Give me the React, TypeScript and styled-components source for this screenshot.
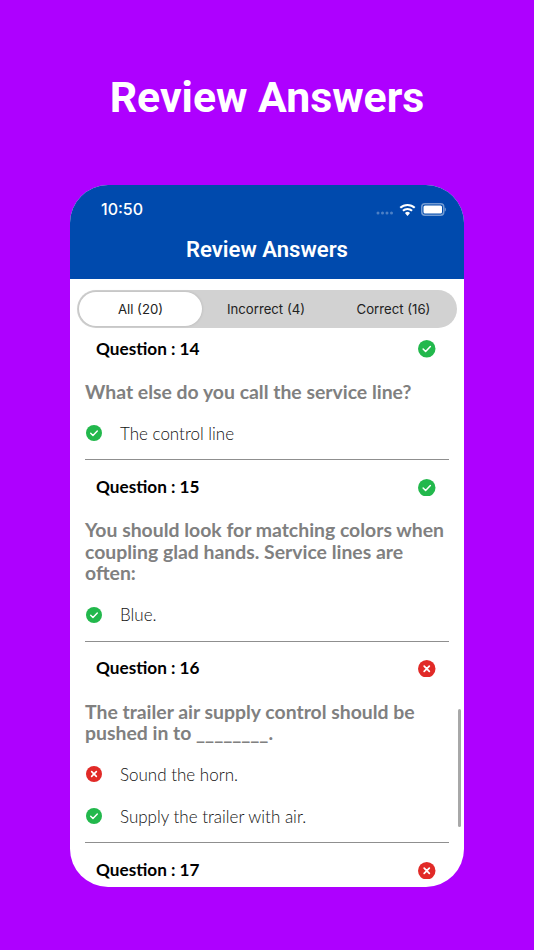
import styled, { createGlobalStyle } from 'styled-components'

const GlobalStyle = createGlobalStyle`
  html, body {
    margin: 0;
    padding: 0;
    background: #ae00ff;
  }
`

const Page = styled.div`
  width: 534px;
  height: 950px;
  overflow: hidden;
  display: flex;
  flex-direction: column;
  align-items: center;
  background: #ae00ff;
`

const Headline = styled.h1`
  margin: 71px 0 0;
  height: 114px;
  font-family: Roboto, sans-serif;
  font-size: 42.8px;
  line-height: 52px;
  font-weight: 700;
  color: #fff;
`

const Phone = styled.div`
  position: relative;
  width: 394px;
  height: 702px;
  border-radius: 38px;
  overflow: hidden;
  background: #fff;
  display: flex;
  flex-direction: column;
`

const Header = styled.header`
  height: 94px;
  flex: none;
  background: #004aad;
  color: #fff;
`

const StatusBar = styled.div`
  height: 48px;
  padding: 0 18px 0 31px;
  display: flex;
  align-items: center;
  justify-content: space-between;
`

const Time = styled.span`
  font-family: Inter, sans-serif;
  font-size: 16px;
  font-weight: 500;
`

const StatusIcons = styled.div`
  display: flex;
  align-items: center;
  gap: 5px;
`

const NavTitle = styled.div`
  margin-top: 2px;
  text-align: center;
  font-family: Roboto, sans-serif;
  font-size: 22.1px;
  line-height: 28px;
  font-weight: 600;
`

const Tabs = styled.div`
  flex: none;
  margin: 11px 7px 0;
  height: 38px;
  border-radius: 19px;
  background: #d2d2d2;
  display: grid;
  grid-template-columns: 125px 1fr 127px;
  align-items: stretch;
`

const Tab = styled.div<{ $active?: boolean }>`
  display: flex;
  align-items: center;
  justify-content: center;
  margin: ${({ $active }) => ($active ? '2px 0 2px 2px' : '0')};
  border-radius: 17px;
  background: ${({ $active }) => ($active ? '#fff' : 'transparent')};
  box-shadow: ${({ $active }) => ($active ? '0 0 3px rgba(0, 0, 0, 0.15)' : 'none')};
  font-family: Inter, sans-serif;
  font-size: 13.2px;
  color: #222;
`

const List = styled.div`
  flex: 1;
  min-height: 0;
  overflow: hidden;
  padding: 0 15px;
`

const Card = styled.section<{ $first?: boolean }>`
  margin-top: ${({ $first }) => ($first ? '-6px' : '0')};
  border-bottom: 1px solid #8f8f8f;
  padding-bottom: 5px;

  &:last-child {
    border-bottom: none;
  }
`

const CardHead = styled.div`
  height: 52px;
  padding: 0 13.5px 0 11px;
  display: flex;
  align-items: center;
  justify-content: space-between;
`

const HeadMark = styled.span`
  display: flex;
  margin-top: 2px;
`

const QuestionNo = styled.span`
  font-family: Lato, sans-serif;
  font-size: 17.2px;
  font-weight: 700;
  color: #000;
`

const QuestionText = styled.p`
  margin: 7px 0 10.2px;
  font-family: Lato, sans-serif;
  font-size: 19.4px;
  line-height: 21.3px;
  font-weight: 700;
  color: #808080;
`

const Answer = styled.div`
  height: 42px;
  padding-left: 1px;
  display: flex;
  align-items: center;
  gap: 18px;
  font-family: Lato, sans-serif;
  font-size: 17px;
  font-weight: 300;
  color: #111;
`

const Scrollbar = styled.div`
  position: absolute;
  right: 3px;
  top: 524px;
  width: 3px;
  height: 118px;
  border-radius: 2px;
  background: #a8a8a8;
`

const StatusMark = ({ ok, size }: { ok: boolean; size: number }) => (
  <svg width={size} height={size} viewBox="0 0 17 17" style={{ flex: 'none' }}>
    <circle cx="8.5" cy="8.5" r="8.5" fill={ok ? '#22b84c' : '#e12a27'} />
    {ok ? (
      <path d="M5 8.8l2.4 2.4L12 6.4" fill="none" stroke="#fff" strokeWidth="1.5" strokeLinecap="round" strokeLinejoin="round" />
    ) : (
      <path d="M6 6l5 5M11 6l-5 5" fill="none" stroke="#fff" strokeWidth="1.7" strokeLinecap="round" />
    )}
  </svg>
)

const SignalDots = () => (
  <svg width="18" height="4" viewBox="0 0 18 4" style={{ marginTop: 8 }}>
    {[2, 6.5, 11, 15.5].map((cx) => (
      <circle key={cx} cx={cx} cy="2" r="1.5" fill="#fff" opacity="0.3" />
    ))}
  </svg>
)

const Wifi = () => (
  <svg width="17" height="13" viewBox="0 0 16 12">
    <path d="M8 12L5.6 9.3a3.4 3.4 0 0 1 4.8 0z" fill="#fff" />
    <path d="M3.7 7.2a6.2 6.2 0 0 1 8.6 0M1.2 4.4a9.8 9.8 0 0 1 13.6 0" fill="none" stroke="#fff" strokeWidth="1.9" />
  </svg>
)

const Battery = () => (
  <svg width="25" height="13" viewBox="0 0 25 13">
    <rect x="0.75" y="0.75" width="22" height="11.5" rx="3.2" fill="none" stroke="#fff" strokeOpacity="0.45" strokeWidth="1.5" />
    <rect x="2.5" y="2.5" width="18.5" height="8" rx="1.5" fill="#fff" />
    <path d="M23.8 4.5v4c.7-.3 1.1-1 1.1-2s-.4-1.7-1.1-2z" fill="#fff" fillOpacity="0.45" />
  </svg>
)

type Item = {
  no: number
  ok: boolean
  text: string
  answers: { ok: boolean; text: string }[]
}

const items: Item[] = [
  {
    no: 14,
    ok: true,
    text: 'What else do you call the service line?',
    answers: [{ ok: true, text: 'The control line' }],
  },
  {
    no: 15,
    ok: true,
    text: 'You should look for matching colors when coupling glad hands. Service lines are often:',
    answers: [{ ok: true, text: 'Blue.' }],
  },
  {
    no: 16,
    ok: false,
    text: 'The trailer air supply control should be pushed in to ________.',
    answers: [
      { ok: false, text: 'Sound the horn.' },
      { ok: true, text: 'Supply the trailer with air.' },
    ],
  },
  { no: 17, ok: false, text: '', answers: [] },
]

const App = () => {
  return (
    <Page>
      <GlobalStyle />
      <Headline>Review Answers</Headline>
      <Phone>
        <Header>
          <StatusBar>
            <Time>10:50</Time>
            <StatusIcons>
              <SignalDots />
              <Wifi />
              <Battery />
            </StatusIcons>
          </StatusBar>
          <NavTitle>Review Answers</NavTitle>
        </Header>
        <Tabs>
          <Tab $active>All (20)</Tab>
          <Tab>Incorrect (4)</Tab>
          <Tab>Correct (16)</Tab>
        </Tabs>
        <List>
          {items.map((item, i) => (
            <Card key={item.no} $first={i === 0}>
              <CardHead>
                <QuestionNo>Question : {item.no}</QuestionNo>
                <HeadMark>
                  <StatusMark ok={item.ok} size={17.5} />
                </HeadMark>
              </CardHead>
              {item.text && <QuestionText>{item.text}</QuestionText>}
              {item.answers.map((answer) => (
                <Answer key={answer.text}>
                  <StatusMark ok={answer.ok} size={16} />
                  {answer.text}
                </Answer>
              ))}
            </Card>
          ))}
        </List>
        <Scrollbar />
      </Phone>
    </Page>
  )
}

export default App
